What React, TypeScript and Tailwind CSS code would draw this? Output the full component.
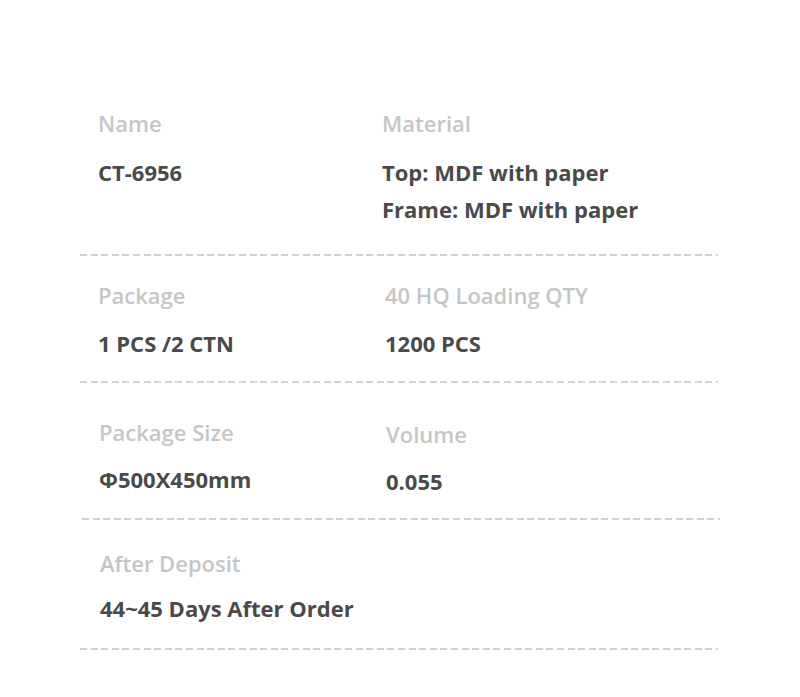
import React from "react";

type Cell = { label: string; values: string[] };

type Row = {
  cells: Cell[];
  left: string;
  col: string;
  top: string;
  gap: string;
  bottom: string;
  rightLabel?: string;
};

const rows: Row[] = [
  {
    cells: [
      { label: "Name", values: ["CT-6956"] },
      { label: "Material", values: ["Top: MDF with paper", "Frame: MDF with paper"] },
    ],
    left: "ml-[98px]",
    col: "w-[284px]",
    top: "pt-[108px]",
    gap: "mt-[19px]",
    bottom: "pb-[30px]",
  },
  {
    cells: [
      { label: "Package", values: ["1 PCS /2 CTN"] },
      { label: "40 HQ Loading QTY", values: ["1200 PCS"] },
    ],
    left: "ml-[98px]",
    col: "w-[287px]",
    top: "pt-[24px]",
    gap: "mt-[18px]",
    bottom: "pb-[23px]",
  },
  {
    cells: [
      { label: "Package Size", values: ["Φ500X450mm"] },
      { label: "Volume", values: ["0.055"] },
    ],
    left: "ml-[99px]",
    col: "w-[287px]",
    top: "pt-[34px]",
    gap: "mt-[17px]",
    bottom: "pb-[22px]",
    rightLabel: "mt-[2px]",
  },
  {
    cells: [{ label: "After Deposit", values: ["44~45 Days After Order"] }],
    left: "ml-[100px]",
    col: "w-[287px]",
    top: "pt-[28px]",
    gap: "mt-[15px]",
    bottom: "pb-[25px]",
  },
];

const lineOffsets = ["ml-[80px]", "ml-[80px]", "ml-[82px]", "ml-[80px]"];

function Dashed({ offset }: { offset: string }) {
  return (
    <div
      className={`${offset} h-[2px] w-[638px] bg-[repeating-linear-gradient(90deg,#d2d2d2_0px,#d2d2d2_7px,transparent_7px,transparent_10.6px)]`}
    />
  );
}

export default function App() {
  return (
    <div className="min-h-[697px] w-[800px] bg-white font-['Open_Sans',sans-serif] text-[22px] font-semibold leading-[30px]">
      {rows.map((row, i) => (
        <div key={i}>
          <div className={`flex ${row.left} ${row.top} ${row.bottom}`}>
            {row.cells.map((cell, j) => (
              <div key={cell.label} className={j === 0 ? `${row.col} shrink-0` : "flex-1"}>
                <div className={`text-[#c6c6c6] ${j === 1 && row.rightLabel ? row.rightLabel : ""}`}>
                  {cell.label}
                </div>
                <div className={`${row.gap} flex flex-col gap-[7px] font-bold text-[#4a4a4a]`}>
                  {cell.values.map((v) => (
                    <div key={v}>{v}</div>
                  ))}
                </div>
              </div>
            ))}
          </div>
          <Dashed offset={lineOffsets[i]} />
        </div>
      ))}
    </div>
  );
}
